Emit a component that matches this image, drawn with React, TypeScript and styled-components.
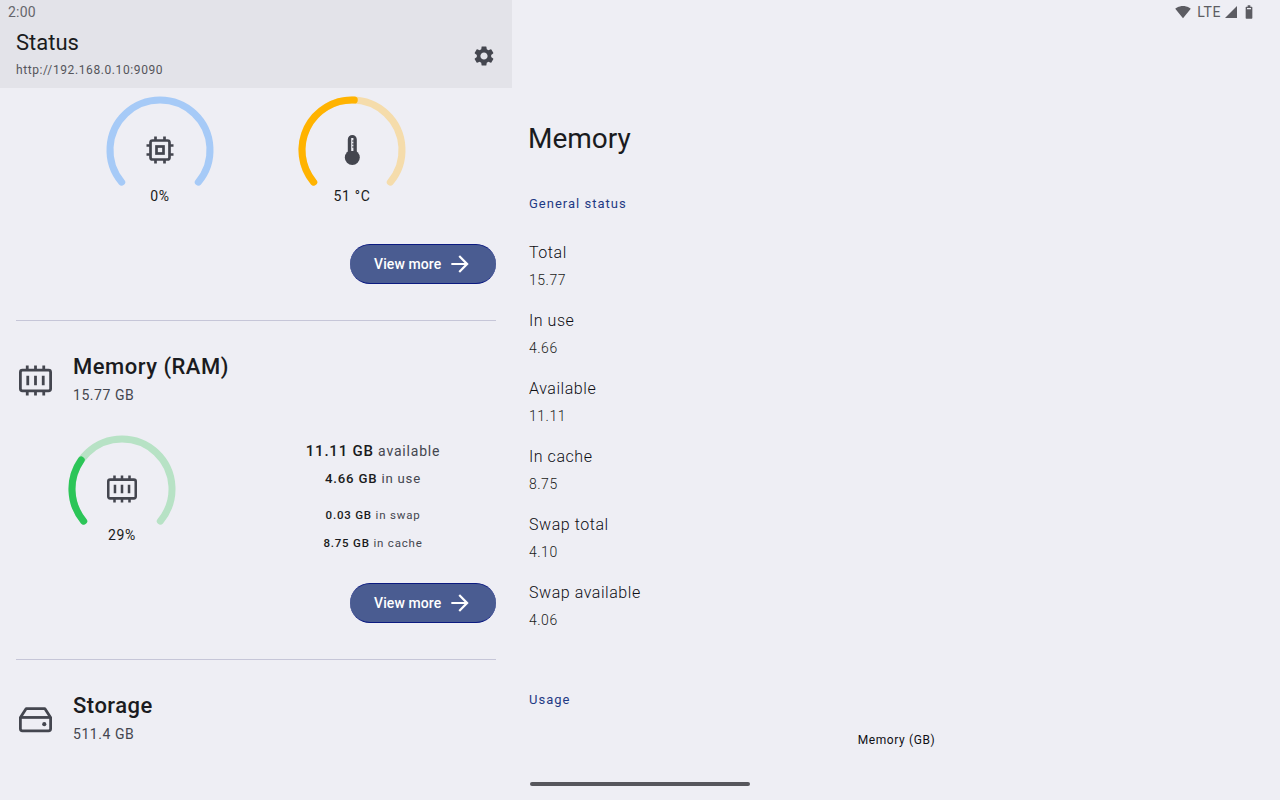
import { ReactNode } from 'react';
import styled, { createGlobalStyle } from 'styled-components';
import { MdSettings, MdArrowForward, MdSignalWifi4Bar, MdBattery6Bar } from 'react-icons/md';

const GlobalStyle = createGlobalStyle`
  html, body {
    margin: 0;
    padding: 0;
    background: #eeeef4;
  }
  * {
    box-sizing: border-box;
  }
`;

const Screen = styled.div`
  position: relative;
  display: flex;
  width: 1280px;
  height: 800px;
  overflow: hidden;
  background: #eeeef4;
  color: #1a1b20;
  font-family: Roboto, 'Liberation Sans', sans-serif;
`;

const StatusBar = styled.div`
  position: absolute;
  top: 0;
  left: 0;
  right: 0;
  height: 24px;
  padding: 0 23px 0 8px;
  display: flex;
  align-items: center;
  justify-content: space-between;
  color: #66666c;
  font-size: 14px;
  letter-spacing: 0.2px;
`;

const StatusIcons = styled.div`
  display: flex;
  align-items: center;
  color: #5c5c62;
  font-size: 14px;
`;

const LteLabel = styled.span`
  margin: 0 3px 0 6px;
  letter-spacing: 0.6px;
`;

const BatteryIcon = styled(MdBattery6Bar)`
  margin-left: 3px;
`;

const ListPane = styled.div`
  width: 512px;
  flex: none;
  display: flex;
  flex-direction: column;
`;

const TopBar = styled.header`
  height: 88px;
  flex: none;
  padding: 29px 16px 0;
  background: #e3e3e9;
  display: flex;
  align-items: flex-start;
  justify-content: space-between;
`;

const TopTitle = styled.div`
  font-size: 22px;
  line-height: 28px;
  color: #1a1b20;
`;

const TopSubtitle = styled.div`
  margin-top: 5px;
  font-size: 12px;
  line-height: 16px;
  letter-spacing: 0.6px;
  color: #55555b;
`;

const GearButton = styled.div`
  display: flex;
  margin-top: 15px;
  color: #44464f;
  font-size: 24px;
`;

const ListBody = styled.div`
  padding: 2px 16px 0;
`;

const GaugeRow = styled.div`
  display: flex;
  justify-content: center;
  gap: 72px;
`;

const GaugeBox = styled.div`
  position: relative;
  width: 120px;
  height: 120px;
  flex: none;
  color: #44464f;
`;

const GaugeIcon = styled.div`
  position: absolute;
  top: 45px;
  left: 45px;
  width: 30px;
  height: 30px;
`;

const GaugeLabel = styled.div`
  position: absolute;
  left: 0;
  right: 0;
  top: 97px;
  text-align: center;
  font-size: 14px;
  line-height: 18px;
  letter-spacing: 0.7px;
  color: #1a1b20;
`;

const ActionRow = styled.div`
  display: flex;
  justify-content: flex-end;
  margin-top: 34px;
`;

const ViewMore = styled.button`
  width: 146px;
  height: 40px;
  padding: 0 0 0 24px;
  display: flex;
  align-items: center;
  gap: 6px;
  border: none;
  border-top: 1px solid #0b1a80;
  border-bottom: 1px solid #0b1a80;
  border-radius: 20px;
  background: #4a5c91;
  color: #ffffff;
  font-family: inherit;
  font-size: 14px;
  font-weight: 500;
  letter-spacing: 0.1px;
`;

const Divider = styled.hr`
  margin: 36px 0 0;
  border: none;
  height: 1px;
  background: #c6c6d8;
`;

const SectionHead = styled.div`
  display: flex;
  align-items: center;
  gap: 21px;
  margin-top: 32px;
  padding-left: 3px;
`;

const TitleIcon = styled.div`
  display: flex;
  width: 33px;
  height: 33px;
  margin-top: 2px;
  color: #44464f;
`;

const SectionTitle = styled.div`
  font-size: 22px;
  line-height: 28px;
  font-weight: 500;
  letter-spacing: 0.5px;
  color: #1a1b20;
`;

const SectionSize = styled.div`
  margin-top: 4px;
  font-size: 14px;
  line-height: 20px;
  letter-spacing: 0.55px;
  color: #44464f;
`;

const MemoryRow = styled.div`
  display: flex;
  height: 120px;
  margin-top: 24px;
  padding-left: 46px;
`;

const MemoryStats = styled.div`
  width: 200px;
  margin-left: 91px;
  padding-top: 8px;
  display: flex;
  flex-direction: column;
  align-items: center;
`;

const StatLine = styled.div<{ $size: number; $boldSize: number; $gap?: number }>`
  height: 28px;
  line-height: 28px;
  margin-top: ${p => p.$gap ?? 0}px;
  font-size: ${p => p.$size}px;
  letter-spacing: 0.8px;
  color: #44464f;
  white-space: nowrap;

  b {
    font-size: ${p => p.$boldSize}px;
    font-weight: 500;
    color: #1a1b20;
  }
`;

const DetailPane = styled.div`
  flex: 1;
  padding: 121px 16px 0;
  display: flex;
  flex-direction: column;
`;

const DetailTitle = styled.h1`
  margin: 0;
  font-size: 28px;
  line-height: 36px;
  font-weight: 400;
  color: #1a1b20;
`;

const GroupLabel = styled.div<{ $top: number }>`
  margin-top: ${p => p.$top}px;
  padding-left: 1px;
  font-size: 13px;
  line-height: 20px;
  font-weight: 400;
  letter-spacing: 1px;
  color: #1f3a84;
`;

const InfoList = styled.div`
  margin-top: 27px;
  padding-left: 1px;
  display: flex;
  flex-direction: column;
  gap: 19px;
`;

const InfoLabel = styled.div`
  font-size: 16px;
  line-height: 24px;
  font-weight: 300;
  letter-spacing: 0.55px;
  color: #0e0f14;
`;

const InfoValue = styled.div`
  margin-top: 5px;
  font-size: 14px;
  line-height: 20px;
  font-weight: 300;
  letter-spacing: 0.5px;
  color: #1a1b20;
`;

const ChartTitle = styled.div`
  margin-top: 22px;
  padding-left: 1px;
  text-align: center;
  font-size: 12px;
  line-height: 16px;
  font-weight: 400;
  letter-spacing: 0.6px;
  color: #0e0f14;
`;

const NavPill = styled.div`
  position: absolute;
  left: 530px;
  bottom: 14px;
  width: 220px;
  height: 4px;
  border-radius: 2px;
  background: #56565c;
`;

// arc goes from lower left over the top to lower right
const START = 230;
const SWEEP = 260;
const RADIUS = 50;

function polar(deg: number) {
  const a = ((deg - 90) * Math.PI) / 180;
  return `${(60 + RADIUS * Math.cos(a)).toFixed(2)} ${(60 + RADIUS * Math.sin(a)).toFixed(2)}`;
}

function arc(fraction: number) {
  const sweep = SWEEP * fraction;
  return `M ${polar(START)} A ${RADIUS} ${RADIUS} 0 ${sweep > 180 ? 1 : 0} 1 ${polar(START + sweep)}`;
}

interface GaugeProps {
  value: number;
  color: string;
  track: string;
  label: string;
  icon: ReactNode;
}

function Gauge({ value, color, track, label, icon }: GaugeProps) {
  return (
    <GaugeBox>
      <svg width="120" height="120" viewBox="0 0 120 120" fill="none" strokeWidth="7" strokeLinecap="round">
        <path d={arc(1)} stroke={track} />
        {value > 0 && <path d={arc(value)} stroke={color} />}
      </svg>
      <GaugeIcon>{icon}</GaugeIcon>
      <GaugeLabel>{label}</GaugeLabel>
    </GaugeBox>
  );
}

const RamIcon = () => (
  <svg width="100%" height="100%" viewBox="0 0 32 32" fill="none" stroke="currentColor" strokeWidth="2.7">
    <rect x="1.35" y="6" width="29.3" height="20" rx="2" />
    <path d="M8 1.5V6M16 1.5V6M24 1.5V6M8 26v4.5M16 26v4.5M24 26v4.5M8.5 11.5v9M16 11.5v9M23.5 11.5v9" />
  </svg>
);

const CpuIcon = () => (
  <svg width="100%" height="100%" viewBox="0 0 30 30" fill="none" stroke="currentColor" strokeWidth="2.7">
    <rect x="5.5" y="5.5" width="19" height="19" rx="2" />
    <rect x="11.5" y="11.5" width="7" height="7" />
    <path d="M10.5 1.5V5M19.5 1.5V5M10.5 25v3.5M19.5 25v3.5M1.5 10.5H5M1.5 19.5H5M25 10.5h3.5M25 19.5h3.5" />
  </svg>
);

const ThermoIcon = () => (
  <svg width="100%" height="100%" viewBox="0 0 30 30">
    <circle cx="15.3" cy="22.5" r="7.5" fill="currentColor" />
    <path d="M10.8 18V4.5a4.5 4.5 0 0 1 9 0V18z" fill="currentColor" />
    <path d="M14.2 3h2.2v13h-2.2z" fill="#eeeef4" />
    <path d="M15 6h2M15 9h2M15 12h2" stroke="#44464f" strokeWidth="1" />
  </svg>
);

const DiskIcon = () => (
  <svg width="100%" height="100%" viewBox="0 0 32 32" fill="none" stroke="currentColor" strokeWidth="2.7" strokeLinejoin="round">
    <path d="M1.35 14 7 5.35h18L30.65 14v11a2 2 0 0 1-2 2H3.35a2 2 0 0 1-2-2z" />
    <path d="M1.35 14h29.3" />
    <circle cx="24.5" cy="20.5" r="2" fill="currentColor" stroke="none" />
  </svg>
);

const SignalIcon = () => (
  <svg width="14" height="14" viewBox="0 0 14 14">
    <path d="M13 1v12H1z" fill="currentColor" />
  </svg>
);

const ViewMoreButton = () => (
  <ViewMore type="button">
    View more
    <MdArrowForward size={26} />
  </ViewMore>
);

const INFO = [
  ['Total', '15.77'],
  ['In use', '4.66'],
  ['Available', '11.11'],
  ['In cache', '8.75'],
  ['Swap total', '4.10'],
  ['Swap available', '4.06'],
];

export default function App() {
  return (
    <Screen>
      <GlobalStyle />
      <ListPane>
        <TopBar>
          <div>
            <TopTitle>Status</TopTitle>
            <TopSubtitle>http://192.168.0.10:9090</TopSubtitle>
          </div>
          <GearButton>
            <MdSettings />
          </GearButton>
        </TopBar>
        <ListBody>
          <GaugeRow>
            <Gauge value={0} color="#a6caf7" track="#a6caf7" label="0%" icon={<CpuIcon />} />
            <Gauge value={0.51} color="#ffb300" track="#f5dcab" label="51 °C" icon={<ThermoIcon />} />
          </GaugeRow>
          <ActionRow>
            <ViewMoreButton />
          </ActionRow>
          <Divider />

          <SectionHead>
            <TitleIcon>
              <RamIcon />
            </TitleIcon>
            <div>
              <SectionTitle>Memory (RAM)</SectionTitle>
              <SectionSize>15.77 GB</SectionSize>
            </div>
          </SectionHead>
          <MemoryRow>
            <Gauge value={0.29} color="#2cc558" track="#b7e2c5" label="29%" icon={<RamIcon />} />
            <MemoryStats>
              <StatLine $size={14} $boldSize={15}>
                <b>11.11 GB</b> available
              </StatLine>
              <StatLine $size={13.2} $boldSize={13.2}>
                <b>4.66 GB</b> in use
              </StatLine>
              <StatLine $size={11.5} $boldSize={11.5} $gap={8}>
                <b>0.03 GB</b> in swap
              </StatLine>
              <StatLine $size={11.5} $boldSize={11.5}>
                <b>8.75 GB</b> in cache
              </StatLine>
            </MemoryStats>
          </MemoryRow>
          <ActionRow>
            <ViewMoreButton />
          </ActionRow>
          <Divider />

          <SectionHead>
            <TitleIcon>
              <DiskIcon />
            </TitleIcon>
            <div>
              <SectionTitle>Storage</SectionTitle>
              <SectionSize>511.4 GB</SectionSize>
            </div>
          </SectionHead>
        </ListBody>
      </ListPane>

      <DetailPane>
        <DetailTitle>Memory</DetailTitle>
        <GroupLabel $top={37}>General status</GroupLabel>
        <InfoList>
          {INFO.map(([label, value]) => (
            <div key={label}>
              <InfoLabel>{label}</InfoLabel>
              <InfoValue>{value}</InfoValue>
            </div>
          ))}
        </InfoList>
        <GroupLabel $top={60}>Usage</GroupLabel>
        <ChartTitle>Memory (GB)</ChartTitle>
      </DetailPane>

      <StatusBar>
        <span>2:00</span>
        <StatusIcons>
          <MdSignalWifi4Bar size={16} />
          <LteLabel>LTE</LteLabel>
          <SignalIcon />
          <BatteryIcon size={16} />
        </StatusIcons>
      </StatusBar>
      <NavPill />
    </Screen>
  );
}
